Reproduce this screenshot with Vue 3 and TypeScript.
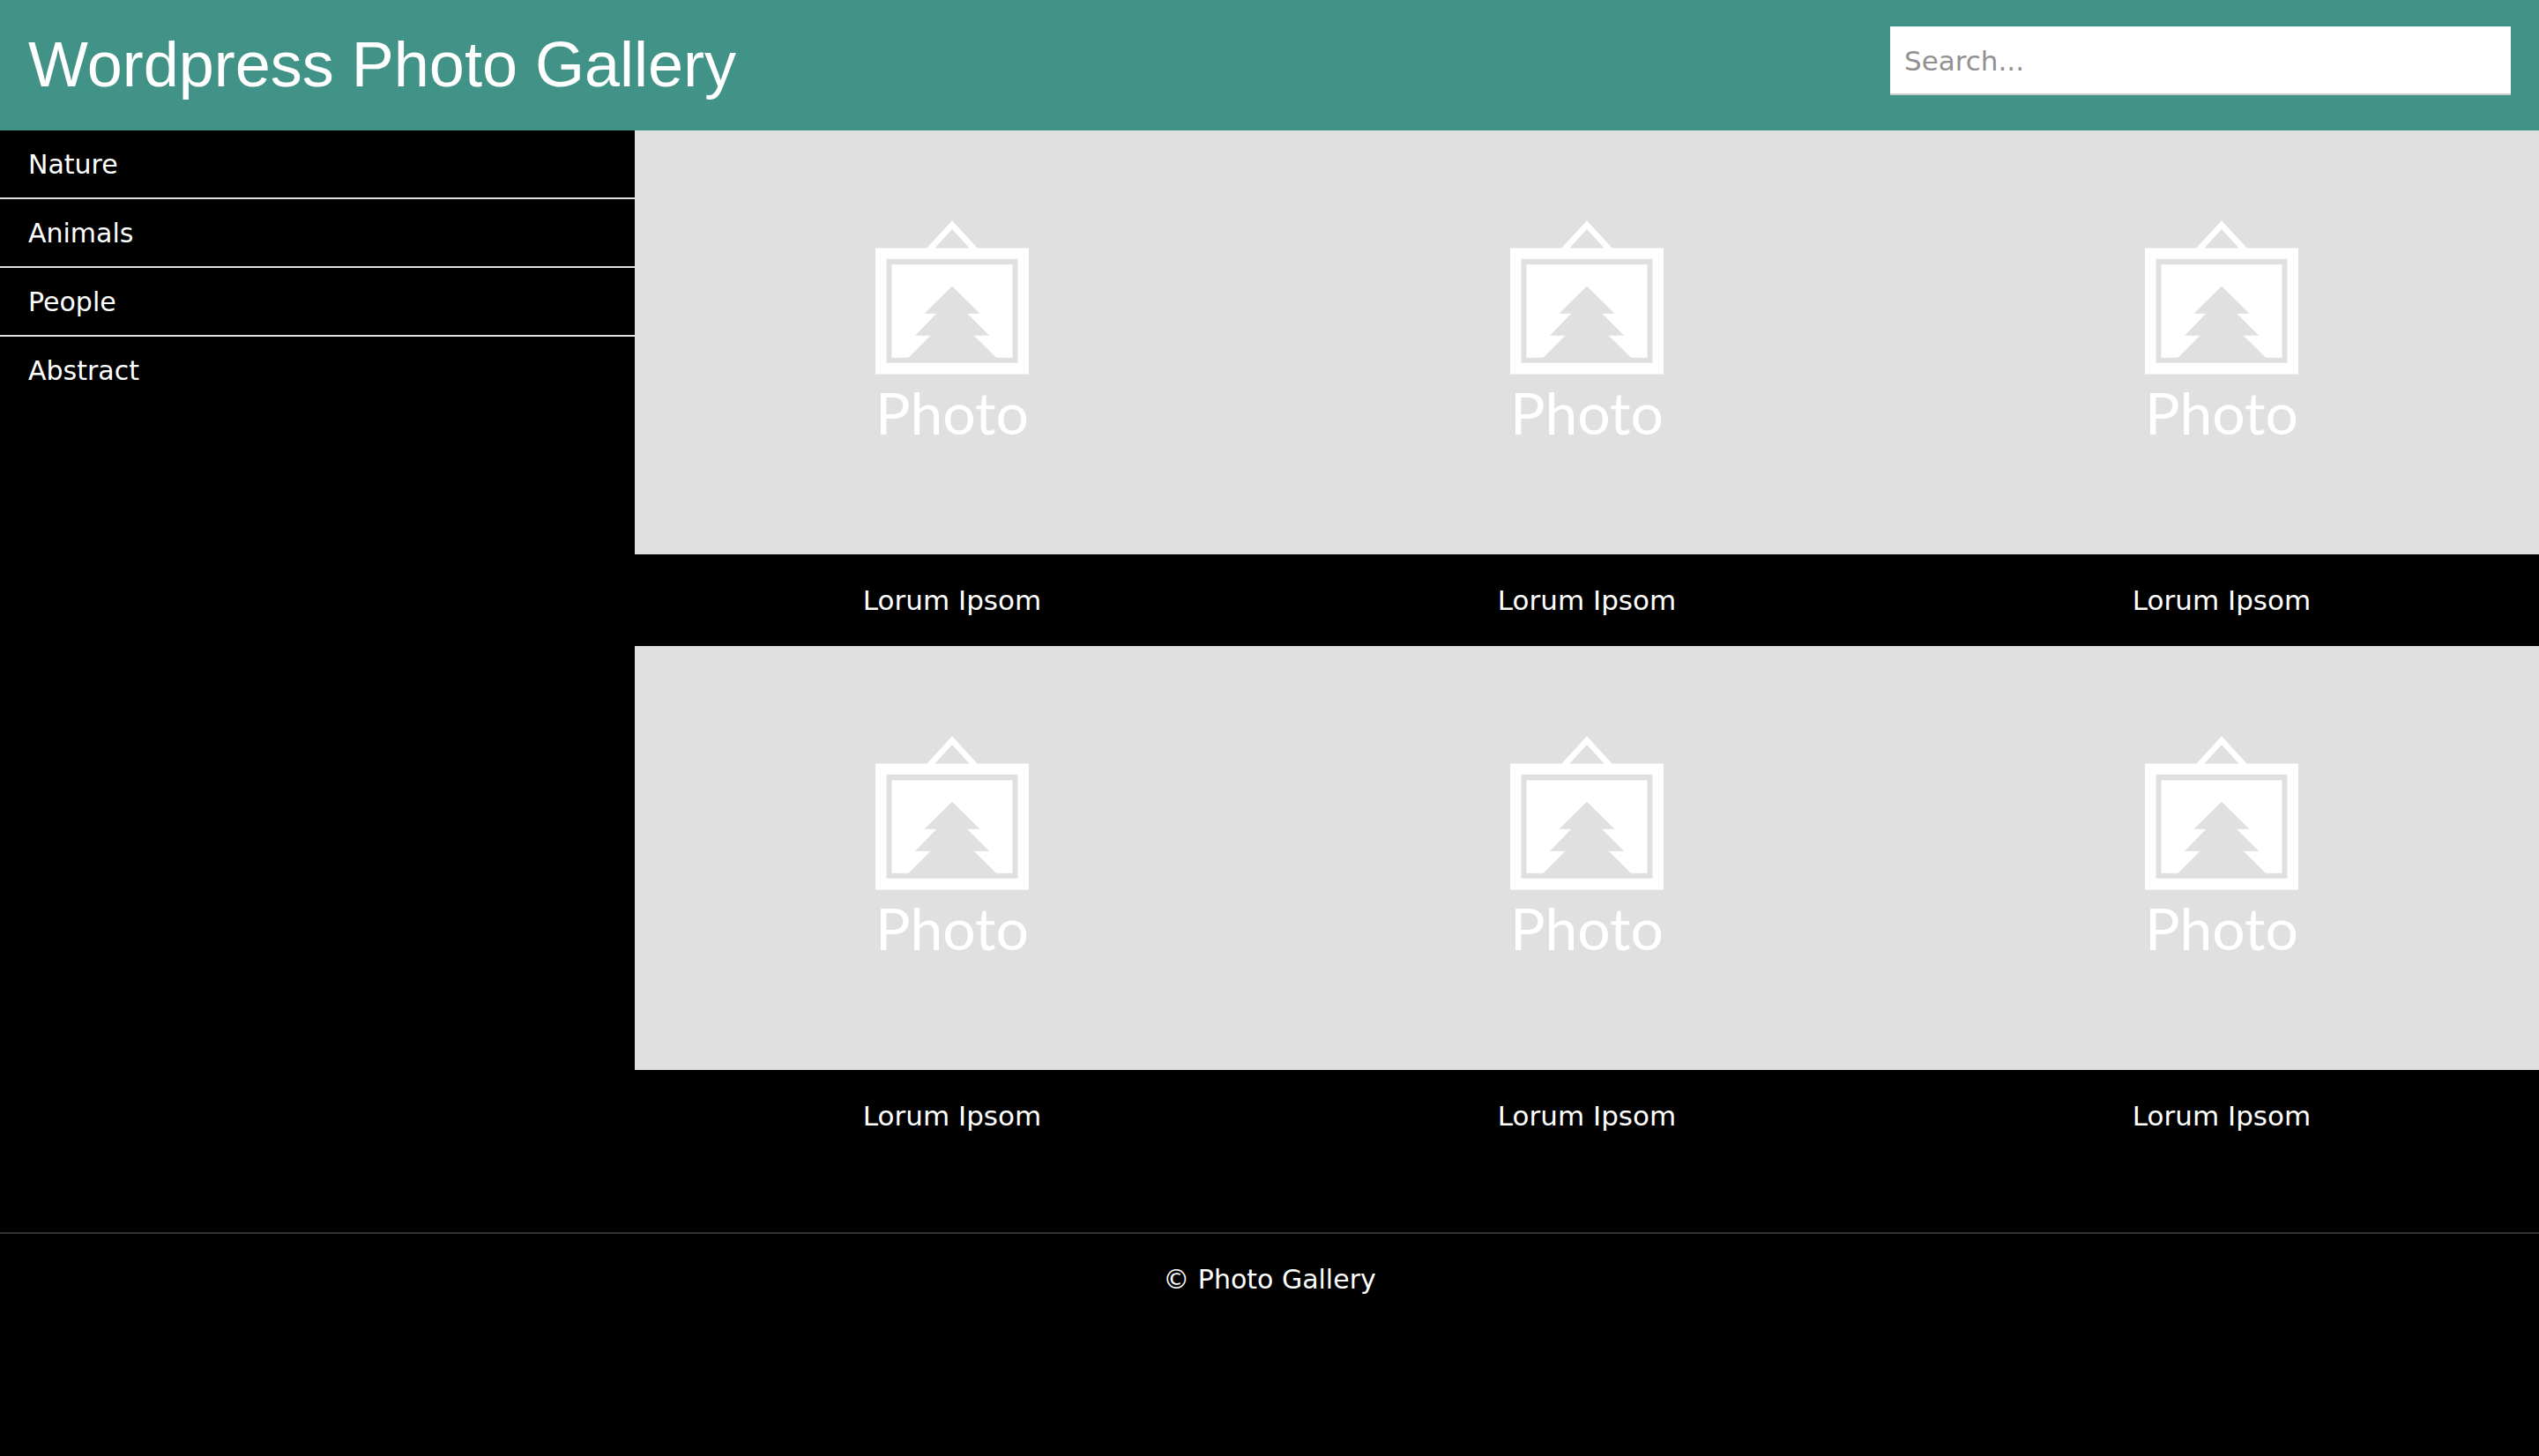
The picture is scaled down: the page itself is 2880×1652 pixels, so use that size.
<script setup lang="ts">
import { ref } from 'vue'

interface Photo {
  id: number
  caption: string
}

const query = ref('')
const categories: string[] = ['Nature', 'Animals', 'People', 'Abstract']
const photos: Photo[] = Array.from({ length: 6 }, (_, i) => ({ id: i + 1, caption: 'Lorum Ipsom' }))
</script>

<template>
  <div class="page">
    <header class="header">
      <h1 class="title">Wordpress Photo Gallery</h1>
      <form class="search" role="search" @submit.prevent>
        <input v-model="query" class="search-input" type="text" placeholder="Search..." aria-label="Search" />
      </form>
    </header>

    <div class="body">
      <nav class="sidebar" aria-label="Categories">
        <ul class="menu">
          <li v-for="category in categories" :key="category" class="menu-item">
            <a href="#" class="menu-link">{{ category }}</a>
          </li>
        </ul>
      </nav>

      <main class="gallery">
        <figure v-for="photo in photos" :key="photo.id" class="card">
          <svg class="picture" viewBox="0 0 720 481" aria-hidden="true">
            <path class="ink" fill-rule="evenodd" d="M331.3 133.5 360 102.3 388.7 133.5H447V276.5H273V133.5ZM340.3 133.5H379.7L360 112ZM285.5 145.7V263.7H434.5V145.7Z" />
            <path class="ink" d="M291.5 152.3H428.5V257.7H410L384.7 232.7H402.3L377.3 207.7H391.7L360 176.7 328.3 207.7H342.3L318 232.7H335.3L310.5 257.7H291.5Z" />
            <text class="picture-label" x="360" y="345">Photo</text>
          </svg>
          <figcaption class="caption">{{ photo.caption }}</figcaption>
        </figure>
      </main>
    </div>

    <footer class="footer">© Photo Gallery</footer>
  </div>
</template>

<style>
body {
  margin: 0;
  background: #000;
}
</style>

<style scoped>
.page {
  color: #fff;
  font: 30px/44px Verdana, 'DejaVu Sans', sans-serif;
}
.header {
  display: flex;
  align-items: flex-start;
  justify-content: space-between;
  background: #429387;
}
.title {
  margin: 0;
  padding: 19px 32px 21px;
  font: 400 72px/108px Arial, 'Liberation Sans', sans-serif;
}
.search {
  box-sizing: border-box;
  width: 768px;
  padding: 30px 32px 0;
}
.search-input {
  display: block;
  box-sizing: border-box;
  width: 100%;
  height: 78px;
  padding: 17px 16px 15px;
  border: 0;
  border-bottom: 2px solid #ccc;
  border-radius: 0;
  background: #fff;
  color: #000;
  font: inherit;
  font-size: 31px;
}
.search-input::placeholder {
  color: #919191;
  opacity: 1;
}
.body {
  display: grid;
  grid-template-columns: 1fr 3fr;
}
.menu {
  margin: 0;
  padding: 0;
  list-style: none;
}
.menu-item + .menu-item {
  border-top: 2px solid #e0e0e0;
}
.menu-link {
  display: block;
  padding: 17px 32px 15px;
  color: inherit;
  text-decoration: none;
}
.gallery {
  display: grid;
  grid-template-columns: repeat(3, 1fr);
}
.card {
  margin: 0;
  text-align: center;
}
.picture {
  display: block;
  width: 100%;
  background: #e0e0e0;
}
.ink {
  fill: #fff;
}
.picture-label {
  fill: #fff;
  font-family: Lato, sans-serif;
  font-size: 66px;
  text-anchor: middle;
}
.caption {
  padding: 30px 0;
  font-size: 31px;
}
.footer {
  margin-top: 80px;
  padding: 30px 0;
  border-top: 2px solid #333;
  text-align: center;
}
</style>
